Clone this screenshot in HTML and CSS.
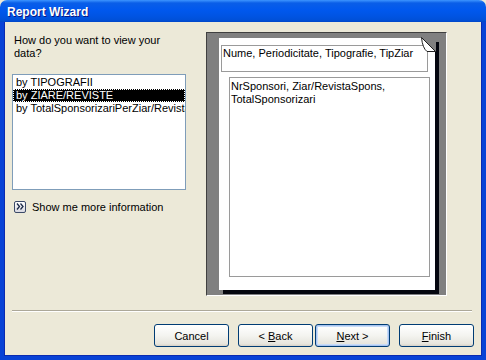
FILE: index.html
```html
<!DOCTYPE html>
<html>

<head>
    <title>Report Wizard</title>
    <link rel="stylesheet" href="styles.css">
</head>

<body>
    <div class="window">
        <div class="titlebar">
            <span class="title">Report Wizard</span>
        </div>

        <div class="client">
            <div class="main">

                <div class="choices">
                    <p class="prompt">How do you want to view your<br>data?</p>
                    <ul class="listbox">
                        <li>by TIPOGRAFII</li>
                        <li class="selected">by ZIARE/REVISTE</li>
                        <li>by TotalSponsorizariPerZiar/Revista</li>
                    </ul>
                    <div class="more">
                        <span class="more-btn">
                            <svg width="8" height="7" viewBox="0 0 8 7">
                                <polyline points="1,0.5 3.5,3.5 1,6.5" fill="none" stroke="#1c2a48" stroke-width="1.3"/>
                                <polyline points="4.5,0.5 7,3.5 4.5,6.5" fill="none" stroke="#1c2a48" stroke-width="1.3"/>
                            </svg>
                        </span>
                        <span>Show me more information</span>
                    </div>
                </div>

                <div class="preview">
                    <div class="page">
                        <svg class="dogear" width="15" height="15" viewBox="0 0 15 15">
                            <polygon points="0,0 15,0 15,15" fill="#808080"/>
                            <path d="M0.5,0.5 L14.5,14.5 L6,14.5 Q1.5,11 0.5,0.5 Z" fill="#fff" stroke="#202020" stroke-width="1"/>
                        </svg>
                        <div class="group-box">Nume, Periodicitate, Tipografie, TipZiar</div>
                        <div class="detail-box">NrSponsori, Ziar/RevistaSpons,<br>TotalSponsorizari</div>
                    </div>
                </div>

            </div>

            <div class="separator"></div>

            <div class="buttons">
                <button class="btn">Cancel</button>
                <button class="btn btn-back">&lt; <u>B</u>ack</button>
                <button class="btn btn-default"><u>N</u>ext &gt;</button>
                <button class="btn"><u>F</u>inish</button>
            </div>
        </div>
    </div>
</body>

</html>
```

FILE: styles.css
```css
body {
    margin: 0;
    font-family: "Liberation Sans", Arial, sans-serif;
    font-size: 11px;
    color: #000;
    background: #ece9d8;
}

.window {
    width: 486px;
    height: 360px;
    display: flex;
    flex-direction: column;
}

.titlebar {
    height: 22px;
    flex: none;
    display: flex;
    align-items: center;
    padding-left: 7px;
    border-radius: 7px 7px 0 0;
    background: linear-gradient(to bottom, #3d95ff 0px, #0a5ee8 3px, #0058ee 10px, #0054e3 16px, #0050d8 20px, #0046c8 22px);
}

.title {
    color: #fff;
    font-weight: bold;
    font-size: 12px;
    text-shadow: 1px 1px 0 #0a1883;
    margin-top: 1px;
}

.client {
    flex: 1;
    display: flex;
    flex-direction: column;
    padding: 10px 8px 9px 8px;
    border: 4px solid #0842d6;
    border-top: 0;
    box-shadow: inset 1px 0 0 #0a2ab0, inset -1px 0 0 #0a2ab0, inset 0 -1px 0 #0a2ab0;
}

.main {
    display: flex;
    gap: 20px;
    height: 264px;
}

/* left column */
.choices {
    width: 174px;
}

.prompt {
    margin: 2px 0 0 2px;
    line-height: 13px;
}

.listbox {
    list-style: none;
    margin: 14px 0 0 0;
    padding: 1px 0 0 0;
    height: 116px;
    box-sizing: border-box;
    border: 1px solid #7f9db9;
    background: #fff;
    overflow: hidden;
}

.listbox li {
    height: 13px;
    line-height: 13px;
    padding-left: 3px;
    white-space: nowrap;
}

.listbox .selected {
    background: #000;
    color: #fff;
    outline: 1px dotted #fff;
    outline-offset: -1px;
}

.more {
    margin: 10px 0 0 2px;
    display: flex;
    align-items: center;
    gap: 6px;
    height: 13px;
}

.more-btn {
    width: 12px;
    height: 12px;
    box-sizing: border-box;
    border: 1px solid #3c4a68;
    border-radius: 2px;
    background: linear-gradient(to bottom, #ffffff, #d8d8e0);
    display: flex;
    align-items: center;
    justify-content: center;
}

/* preview */
.preview {
    width: 241px;
    box-sizing: border-box;
    border: 1px solid;
    border-color: #404040 #fff #fff #404040;
    background: #808080;
    padding: 5px 0 0 12px;
}

.page {
    position: relative;
    width: 216px;
    height: 252px;
    box-sizing: border-box;
    background: #fff;
    box-shadow: 4px 4px 0 #05070f;
    padding-top: 7px;
}

.dogear {
    position: absolute;
    top: -1px;
    right: -1px;
}

.group-box {
    margin-left: 2px;
    width: 207px;
    height: 27px;
    box-sizing: border-box;
    border: 1px solid #9a9a9a;
    padding: 1px 0 0 1px;
    line-height: 13px;
    white-space: nowrap;
}

.detail-box {
    margin: 5px 0 0 10px;
    width: 201px;
    height: 200px;
    box-sizing: border-box;
    border: 1px solid #9a9a9a;
    padding: 2px 0 0 1px;
    line-height: 13px;
}

/* bottom */
.separator {
    margin: 14px 2px 0 0;
    height: 1px;
    border-top: 1px solid #aca899;
    border-bottom: 1px solid #fff;
    height: 0;
}

.buttons {
    margin-top: 12px;
    display: flex;
    justify-content: flex-end;
    gap: 9px;
}

.btn {
    width: 75px;
    height: 23px;
    padding: 0;
    font-family: "Liberation Sans", Arial, sans-serif;
    font-size: 11px;
    color: #000;
    border: 1px solid #003c74;
    border-radius: 3px;
    background: linear-gradient(to bottom, #ffffff 0%, #f4f4f0 50%, #e6e5dd 90%, #d6d0c5 100%);
}

.btn-back {
    margin-right: -7px;
}

.btn-default {
    box-shadow: inset 0 0 0 1px #a8c4f0, inset 0 0 0 2px #c8dcf8;
}
```
